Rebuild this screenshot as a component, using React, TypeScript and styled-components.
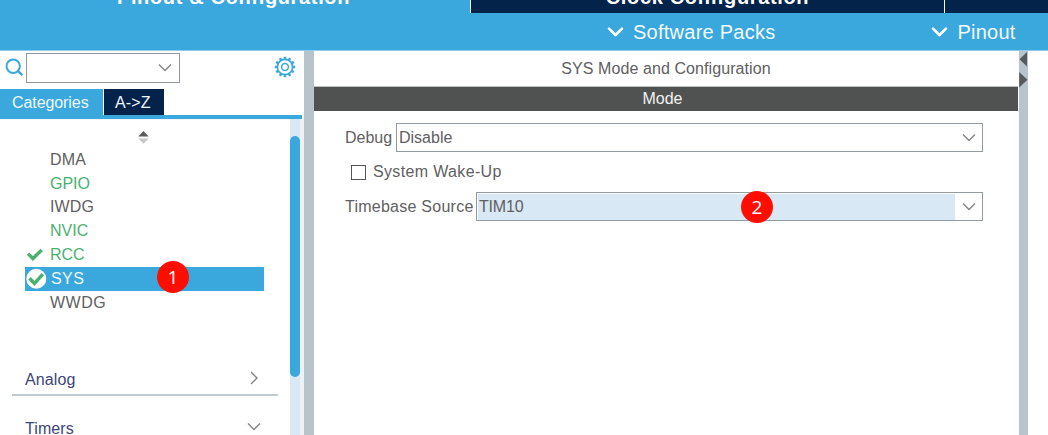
import React from "react";
import styled, { createGlobalStyle } from "styled-components";

const blue = "#3aa8dc";
const navy = "#03234b";
const slate = "#b8c4cb";
const ink = "#5f6062";
const green = "#49b170";

const GlobalStyle = createGlobalStyle`
  * { box-sizing: border-box; }
  body { margin: 0; background: #fff; overflow: hidden; font-family: "Liberation Sans", Arial, sans-serif; font-size: 16px; color: ${ink}; }
  svg { display: block; flex: none; }
`;

const Window = styled.div`
  width: 1048px;
  height: 435px;
  overflow: hidden;
  display: flex;
  flex-direction: column;
`;

const TopTabs = styled.nav`
  height: 13px;
  flex: none;
  display: flex;
  overflow: hidden;
`;

const TopTab = styled.div<{ $width: number; $active?: boolean; $shift?: number }>`
  width: ${(p) => p.$width}px;
  flex: none;
  height: 13px;
  background: ${(p) => (p.$active ? blue : navy)};
  border-right: 1px solid #f4f8fb;
  color: #fff;
  font-size: 20px;
  font-weight: bold;
  line-height: 24px;
  letter-spacing: 0.65px;
  white-space: nowrap;
  display: flex;
  justify-content: center;
  align-items: flex-end;
  padding: 0 ${(p) => p.$shift ?? 0}px 4px 0;
`;

const MenuBar = styled.div`
  height: 38px;
  flex: none;
  display: flex;
  align-items: center;
  background: ${blue};
  border-bottom: 1px solid #8ecbea;
  padding-left: 607px;
  gap: 156px;
`;

const MenuItem = styled.div<{ $spacing: number }>`
  display: flex;
  align-items: center;
  gap: 9px;
  color: #f4fafd;
  font-size: 20px;
  line-height: 24px;
  letter-spacing: ${(p) => p.$spacing}px;
  white-space: nowrap;
`;

const Body = styled.div`
  flex: 1;
  display: flex;
  min-height: 0;
`;

const Sidebar = styled.aside`
  width: 304px;
  flex: none;
  display: flex;
  flex-direction: column;
`;

const SearchRow = styled.div`
  height: 38px;
  flex: none;
  display: flex;
  align-items: flex-start;
  padding: 2px 8px 0 5px;
`;

const SearchBox = styled.div`
  width: 154px;
  height: 30px;
  margin-left: 2px;
  border: 1px solid #8f989e;
  display: flex;
  align-items: center;
  justify-content: flex-end;
  padding-right: 7px;
`;

const GearSlot = styled.div`
  margin: 3px 0 0 auto;
`;

const CategoryTabs = styled.div`
  height: 30px;
  width: 302px;
  flex: none;
  display: flex;
  gap: 1px;
  border-bottom: 4px solid ${blue};
`;

const CategoryTab = styled.div<{ $width: number; $active?: boolean; $spacing: number }>`
  width: ${(p) => p.$width}px;
  background: ${(p) => (p.$active ? blue : navy)};
  color: #eef7fc;
  line-height: 27px;
  padding-left: ${(p) => (p.$active ? 12 : 11)}px;
  letter-spacing: ${(p) => p.$spacing}px;
  font-size: 16px;
  white-space: nowrap;
`;

const ScrollPane = styled.div`
  flex: 1;
  display: flex;
  min-height: 0;
`;

const PaneContent = styled.div`
  width: 290px;
  border-top: 1px solid #f4f5f6;
  overflow: hidden;
`;

const ScrollTrack = styled.div`
  width: 10px;
  background: #d9e8f5;
  padding-top: 17px;
`;

const ScrollThumb = styled.div`
  height: 241px;
  border-radius: 5px;
  background: ${blue};
`;

const PaneEdge = styled.div`
  width: 4px;
  background: #eff1f4;
`;

const SortHandle = styled.div`
  height: 28px;
  padding: 11px 0 0 138px;
`;

const Peripherals = styled.div`
  width: 239px;
  margin-left: 25px;
`;

const Peripheral = styled.div<{ $tone?: string; $selected?: boolean; $spacing?: number }>`
  height: 23.8px;
  display: flex;
  align-items: center;
  color: ${(p) => (p.$selected ? "#eef7fc" : p.$tone ?? ink)};
  background: ${(p) => (p.$selected ? blue : "transparent")};
  letter-spacing: ${(p) => p.$spacing ?? 0}px;
  position: relative;
`;

const StatusSlot = styled.span<{ $width: number }>`
  width: ${(p) => p.$width}px;
  flex: none;
`;

const Group = styled.div<{ $line?: boolean }>`
  height: 32px;
  margin: 0 12px;
  padding: 3px 17px 0 13px;
  display: flex;
  align-items: center;
  justify-content: space-between;
  color: #3b4779;
  letter-spacing: 0.1px;
  border-bottom: ${(p) => (p.$line ? "2px solid #c0cad1" : "none")};
`;

const GroupIcon = styled.span`
  margin-top: -5px;
`;

const Groups = styled.div`
  margin-top: 49px;
  display: flex;
  flex-direction: column;
  gap: 16px;
`;

const Splitter = styled.div<{ $width: number }>`
  width: ${(p) => p.$width}px;
  flex: none;
  background: ${slate};
`;

const Main = styled.main`
  width: 705px;
  flex: none;
  padding-right: 1px;
`;

const PanelTitle = styled.h1`
  margin: 0;
  height: 35px;
  line-height: 35px;
  font-size: 16px;
  font-weight: normal;
  letter-spacing: 0.08px;
  text-align: center;
`;

const ModeBar = styled.h2`
  margin: 0;
  height: 25px;
  border-top: 1px solid #bcbdbd;
  background: #505251;
  color: #f2f2f2;
  font-size: 16px;
  font-weight: normal;
  line-height: 24px;
  letter-spacing: 0;
  text-align: center;
  padding-right: 7px;
`;

const Form = styled.div`
  padding: 12px 35px 0 31px;
`;

const Field = styled.div`
  height: 29px;
  display: flex;
  align-items: center;
  white-space: nowrap;
`;

const FieldLabel = styled.label<{ $width: number; $spacing: number }>`
  width: ${(p) => p.$width}px;
  flex: none;
  letter-spacing: ${(p) => p.$spacing}px;
`;

const Select = styled.div`
  flex: 1;
  height: 29px;
  border: 1px solid #929ba1;
  border-bottom-width: 1.5px;
  display: flex;
  align-items: stretch;
  position: relative;
`;

const SelectValue = styled.div<{ $filled?: boolean; $spacing: number }>`
  flex: 1;
  margin: 1px 0 0 1px;
  background: ${(p) => (p.$filled ? "#d9e8f5" : "transparent")};
  line-height: 26px;
  padding-left: 1px;
  letter-spacing: ${(p) => p.$spacing}px;
`;

const SelectArrow = styled.div`
  width: 27px;
  display: flex;
  align-items: center;
  justify-content: center;
`;

const CheckRow = styled.div`
  height: 40px;
  display: flex;
  align-items: center;
  padding-left: 6px;
  gap: 7px;
  letter-spacing: 0.35px;
`;

const CheckBox = styled.span`
  width: 15px;
  height: 15px;
  border: 1px solid #555;
`;

const Marker = styled.span<{ $left: number; $top: number }>`
  position: absolute;
  left: ${(p) => p.$left}px;
  top: ${(p) => p.$top}px;
  width: 32px;
  height: 32px;
  border-radius: 50%;
  background: #ff0d00;
  color: #fff;
  font-family: "Open Sans", sans-serif;
  font-size: 19px;
  line-height: 33px;
  letter-spacing: 0;
  text-align: center;
  z-index: 1;
`;

const Chevron = ({ right = false }: { right?: boolean }) => (
  <svg width="14" height="14" viewBox="0 0 14 14" fill="none" stroke="#858585" strokeWidth="1.4">
    <path d={right ? "M4 1l6 6-6 6" : "M1 3.6l6 6 6-6"} />
  </svg>
);

const MenuChevron = () => (
  <svg width="17" height="11" viewBox="0 0 17 11" fill="none" stroke="#fff" strokeWidth="2.6" strokeLinecap="round" strokeLinejoin="round">
    <path d="M2 2.6l6.5 6.4L15 2.6" />
  </svg>
);

const Check = ({ disc = false }: { disc?: boolean }) => (
  <svg width="22" height="22" viewBox="0 0 22 22" fill="none">
    {disc && <circle cx="11.3" cy="10.8" r="10" fill="#fff" />}
    <path
      d={disc ? "M4.5 10.2l5 5.2L17.8 6.2" : "M3 9.6l4.9 4.9L16.7 6"}
      stroke={green}
      strokeWidth="3.4"
    />
  </svg>
);

const SearchIcon = () => (
  <svg width="19" height="26" viewBox="0 0 19 26" fill="none" stroke={blue} strokeWidth="2">
    <circle cx="8.2" cy="13.2" r="6.7" />
    <path d="M12.8 17.9l4.6 4.2" strokeWidth="2.4" />
  </svg>
);

const teeth = Array.from({ length: 12 }, (_, i) => i * 30);

const GearIcon = () => (
  <svg width="22" height="22" viewBox="0 0 22 22" fill="none" stroke={blue}>
    <circle cx="11" cy="11" r="7.6" strokeWidth="1.6" />
    <circle cx="11" cy="11" r="3.4" strokeWidth="1.5" />
    {teeth.map((a) => (
      <path key={a} d="M11 3.4V0.8" strokeWidth="2.6" transform={`rotate(${a} 11 11)`} />
    ))}
  </svg>
);

const SortIcon = () => (
  <svg width="11" height="14" viewBox="0 0 11 14">
    <path d="M0.3 5.4L5.5 0l5.2 5.4z" fill="#5b5b5b" />
    <path d="M0.3 7.6h10.4L5.5 12.8z" fill="#c8c8c8" />
  </svg>
);

const SplitArrows = () => (
  <svg width="9" height="38" viewBox="0 0 9 38" fill="#58595b">
    <path d="M8 1v14.5L0.5 8.2z" />
    <path d="M0.2 21v15.5L8.5 28.7z" />
  </svg>
);

const App = () => (
  <>
    <GlobalStyle />
    <Window>
      <TopTabs>
        <TopTab $width={471} $active $shift={3}>Pinout &amp; Configuration</TopTab>
        <TopTab $width={474}>Clock Configuration</TopTab>
        <TopTab $width={110} />
      </TopTabs>
      <MenuBar>
        <MenuItem $spacing={0.25}><MenuChevron />Software Packs</MenuItem>
        <MenuItem $spacing={0.25}><MenuChevron />Pinout</MenuItem>
      </MenuBar>
      <Body>
        <Sidebar>
          <SearchRow>
            <SearchIcon />
            <SearchBox><Chevron /></SearchBox>
            <GearSlot><GearIcon /></GearSlot>
          </SearchRow>
          <CategoryTabs>
            <CategoryTab $width={103} $active $spacing={-0.08}>Categories</CategoryTab>
            <CategoryTab $width={60} $spacing={0.1}>A-&gt;Z</CategoryTab>
          </CategoryTabs>
          <ScrollPane>
            <PaneContent>
              <SortHandle><SortIcon /></SortHandle>
              <Peripherals>
                <Peripheral $spacing={0.2}><StatusSlot $width={25} />DMA</Peripheral>
                <Peripheral $tone={green}><StatusSlot $width={25} />GPIO</Peripheral>
                <Peripheral $spacing={0.1}><StatusSlot $width={25} />IWDG</Peripheral>
                <Peripheral $tone={green}><StatusSlot $width={25} />NVIC</Peripheral>
                <Peripheral $tone={green}><StatusSlot $width={25}><Check /></StatusSlot>RCC</Peripheral>
                <Peripheral $selected $spacing={0.4}>
                  <StatusSlot $width={26}><Check disc /></StatusSlot>SYS
                  <Marker $left={132} $top={-6}>1</Marker>
                </Peripheral>
                <Peripheral $spacing={0.5}><StatusSlot $width={25} />WWDG</Peripheral>
              </Peripherals>
              <Groups>
                <Group $line>Analog<GroupIcon><Chevron right /></GroupIcon></Group>
                <Group>Timers<GroupIcon><Chevron /></GroupIcon></Group>
              </Groups>
            </PaneContent>
            <ScrollTrack><ScrollThumb /></ScrollTrack>
            <PaneEdge />
          </ScrollPane>
        </Sidebar>
        <Splitter $width={10} />
        <Main>
          <PanelTitle>SYS Mode and Configuration</PanelTitle>
          <ModeBar>Mode</ModeBar>
          <Form>
            <Field>
              <FieldLabel $width={51} $spacing={0}>Debug</FieldLabel>
              <Select>
                <SelectValue $spacing={0}>Disable</SelectValue>
                <SelectArrow><Chevron /></SelectArrow>
              </Select>
            </Field>
            <CheckRow><CheckBox />System Wake-Up</CheckRow>
            <Field>
              <FieldLabel $width={131} $spacing={0.25}>Timebase Source</FieldLabel>
              <Select>
                <SelectValue $filled $spacing={-0.2}>TIM10</SelectValue>
                <SelectArrow><Chevron /></SelectArrow>
                <Marker $left={264} $top={-2}>2</Marker>
              </Select>
            </Field>
          </Form>
        </Main>
        <Splitter $width={9}><SplitArrows /></Splitter>
      </Body>
    </Window>
  </>
);

export default App;
